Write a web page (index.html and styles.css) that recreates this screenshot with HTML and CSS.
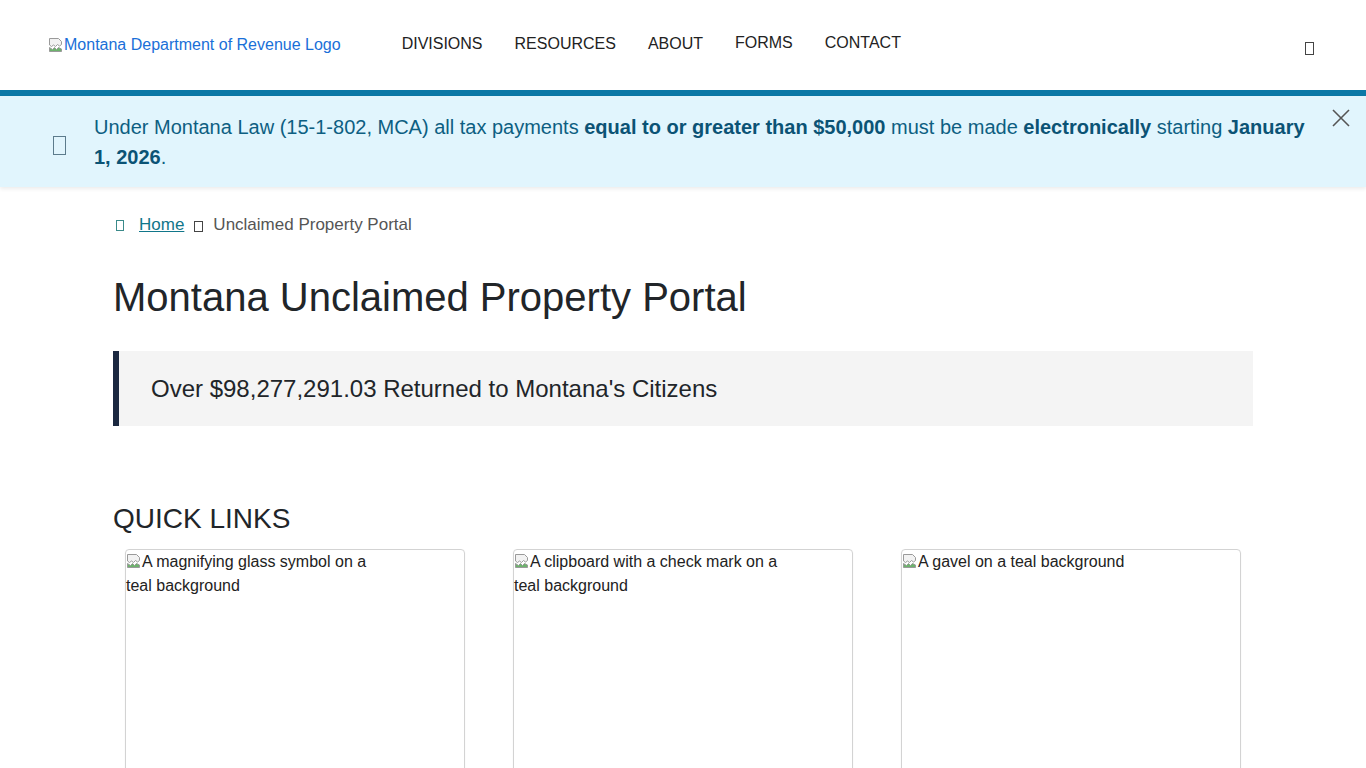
FILE: index.html
```html
<!DOCTYPE html>
<html lang="en">
<head>
<meta charset="utf-8">
<title>Montana Unclaimed Property Portal</title>
<link rel="stylesheet" href="styles.css">
</head>
<body>
<header class="site-header">
  <a class="logo" href="#"><svg class="broken" width="16" height="16" viewBox="0 0 16 16"><path d="M1.5 1.5h9l3 3v3l-2 1.5-2-1.5-2 2-2-1.5-2 1.5-2-1.5z" fill="#f2f2f2" stroke="#9a9a9a"/><path d="M1.5 10.5l3 2 2-2 2 2 2-2 3 1.5v2.5h-12z" fill="#6db36d" stroke="#9a9a9a"/></svg>Montana Department of Revenue Logo</a>
  <nav class="main-nav">
    <a href="#">DIVISIONS</a>
    <a href="#">RESOURCES</a>
    <a href="#">ABOUT</a>
    <a href="#" class="up">FORMS</a>
    <a href="#" class="up">CONTACT</a>
  </nav>
  <span class="tofu search-tofu"></span>
</header>
<div class="alert">
  <span class="tofu alert-tofu"></span>
  <p class="alert-text">Under Montana Law (15-1-802, MCA) all tax payments <b>equal to or greater than $50,000</b> must be made <b>electronically</b> starting <b>January 1, 2026</b>.</p>
  <button class="close" aria-label="Close"><svg width="18" height="18" viewBox="0 0 18 18"><path d="M1 1L17 17M17 1L1 17" stroke="#555" stroke-width="1.6"/></svg></button>
</div>
<main class="container">
  <nav class="breadcrumb">
    <span class="tofu bc-home"></span>
    <a href="#">Home</a>
    <span class="tofu bc-sep"></span>
    <span>Unclaimed Property Portal</span>
  </nav>
  <h1>Montana Unclaimed Property Portal</h1>
  <div class="stat">Over $98,277,291.03 Returned to Montana's Citizens</div>
  <h2>QUICK LINKS</h2>
  <div class="cards">
    <div class="card"><span class="alt"><svg class="broken" width="16" height="16" viewBox="0 0 16 16"><path d="M1.5 1.5h9l3 3v3l-2 1.5-2-1.5-2 2-2-1.5-2 1.5-2-1.5z" fill="#f2f2f2" stroke="#9a9a9a"/><path d="M1.5 10.5l3 2 2-2 2 2 2-2 3 1.5v2.5h-12z" fill="#6db36d" stroke="#9a9a9a"/></svg>A magnifying glass symbol on a teal background</span></div>
    <div class="card"><span class="alt"><svg class="broken" width="16" height="16" viewBox="0 0 16 16"><path d="M1.5 1.5h9l3 3v3l-2 1.5-2-1.5-2 2-2-1.5-2 1.5-2-1.5z" fill="#f2f2f2" stroke="#9a9a9a"/><path d="M1.5 10.5l3 2 2-2 2 2 2-2 3 1.5v2.5h-12z" fill="#6db36d" stroke="#9a9a9a"/></svg>A clipboard with a check mark on a teal background</span></div>
    <div class="card"><span class="alt"><svg class="broken" width="16" height="16" viewBox="0 0 16 16"><path d="M1.5 1.5h9l3 3v3l-2 1.5-2-1.5-2 2-2-1.5-2 1.5-2-1.5z" fill="#f2f2f2" stroke="#9a9a9a"/><path d="M1.5 10.5l3 2 2-2 2 2 2-2 3 1.5v2.5h-12z" fill="#6db36d" stroke="#9a9a9a"/></svg>A gavel on a teal background</span></div>
  </div>
</main>
</body>
</html>
```
FILE: styles.css
```css
* { box-sizing: border-box; }
html, body { margin: 0; padding: 0; }
body {
  font-family: "Liberation Sans", Arial, sans-serif;
  color: #212529;
  background: #fff;
  overflow: hidden;
}
.tofu {
  display: inline-block;
  border: 1px solid #333;
}
.site-header {
  height: 96px;
  display: flex;
  align-items: center;
  padding: 0 48px;
  border-bottom: 6px solid #0b78a6;
}
.logo {
  color: #1a6fd8;
  text-decoration: none;
  font-size: 16px;
  display: flex;
  align-items: center;
  margin-top: -1px;
}
.broken { display: inline-block; vertical-align: -2px; }
.main-nav {
  display: flex;
  gap: 32px;
  margin-left: 61px;
  margin-top: -3px;
}
.main-nav a {
  color: #222;
  text-decoration: none;
  font-size: 16px;
}
.main-nav a.up { position: relative; top: -1px; }
.search-tofu {
  margin-left: auto;
  width: 9px;
  height: 13px;
  margin-right: 4px;
  margin-top: 6px;
  border-color: #444;
}
.alert {
  background: #e1f5fd;
  display: flex;
  align-items: flex-start;
  padding: 16px 16px 15px 53px;
  box-shadow: 0 2px 4px rgba(0,0,0,0.08);
}
.alert-tofu {
  width: 13px;
  height: 19px;
  border-color: #5c7b8c;
  margin-top: 24px;
  flex-shrink: 0;
}
.alert-text {
  margin: 0 0 0 28px;
  font-size: 20px;
  line-height: 30px;
  color: #0d5f82;
  max-width: 1220px;
}
.alert-text b { color: #0b5375; }
.close {
  background: none;
  border: 0;
  padding: 0;
  margin: -3px 0 0 auto;
  cursor: pointer;
  line-height: 0;
  flex-shrink: 0;
}
.container {
  width: 1140px;
  margin: 0 auto;
}
.breadcrumb {
  display: flex;
  align-items: center;
  font-size: 17px;
  color: #555;
  margin-top: 28px;
}
.breadcrumb a { color: #11768a; }
.bc-home {
  width: 8px;
  height: 11px;
  border-color: #3b8a8a;
  margin: 0 15px 0 3px;
}
.bc-sep {
  width: 9px;
  height: 11px;
  border-color: #444;
  margin: 2px 10px 0 10px;
}
h1 {
  font-size: 40px;
  font-weight: 400;
  margin: 38px 0 30px;
  line-height: 1.2;
  color: #212529;
}
.stat {
  background: #f4f4f4;
  border-left: 6px solid #1b2840;
  padding: 25px 32px 24px;
  font-size: 24px;
  line-height: 26px;
  color: #212529;
}
h2 {
  font-size: 28px;
  font-weight: 400;
  margin: 76px 0 14px;
  line-height: 33px;
  color: #212529;
}
.cards {
  display: grid;
  grid-template-columns: repeat(3, 340px);
  gap: 48px;
  padding: 0 12px;
}
.card {
  border: 1px solid #d3d3d3;
  border-radius: 4px;
  height: 260px;
  box-shadow: 0 1px 2px rgba(0,0,0,0.05);
}
.alt {
  display: inline-block;
  width: 268px;
  font-size: 16px;
  line-height: 24px;
  color: #222;
}
```
